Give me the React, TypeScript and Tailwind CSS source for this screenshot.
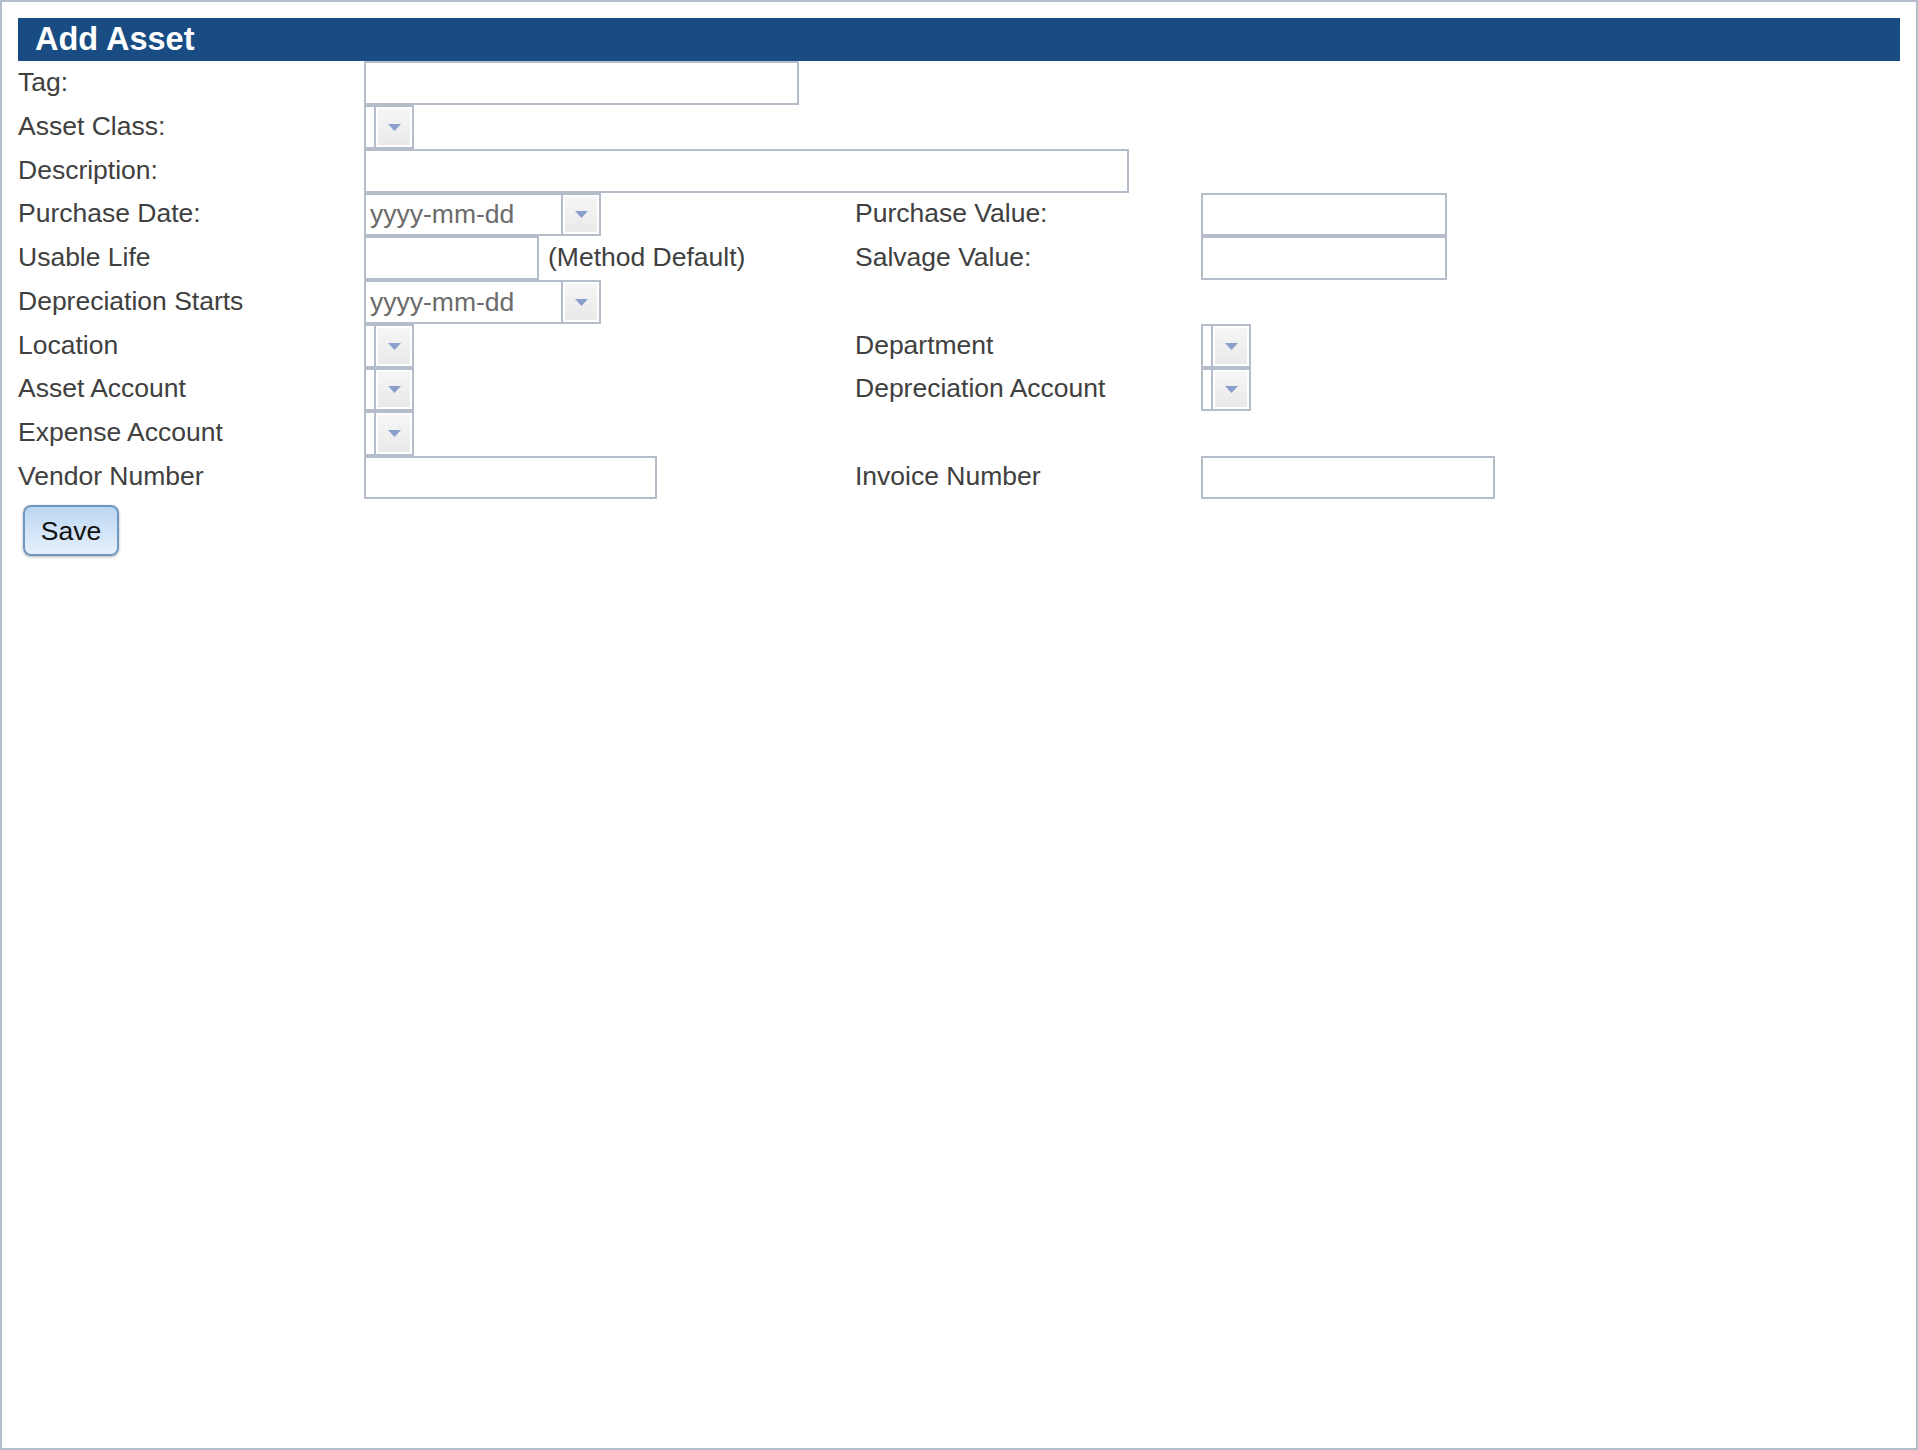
import React from 'react';

const bd = 'border-2 border-[#b6bdca]';

function Arrow() {
  return (
    <svg width="13" height="7" viewBox="0 0 13 7">
      <polygon points="0,0 13,0 6.5,7" fill="#8a9fcb" />
    </svg>);

}

function DropButton() {
  return (
    <div className="w-[38px] h-full border-l-2 border-[#b6bdca] p-[2px] bg-white">
      <div className="w-full h-full bg-gradient-to-b from-[#f6f6f6] to-[#e9e9e9] flex items-center justify-center">
        <Arrow />
      </div>
    </div>);

}

function Combo() {
  return (
    <div className={`${bd} h-full w-[50px] flex bg-white`}>
      <div className="w-[8px]" />
      <DropButton />
    </div>);

}

function DateField() {
  return (
    <div className={`${bd} h-full w-[237px] flex bg-white`}>
      <div className="flex-1 flex items-center pl-[4px] pb-[1px] text-[#6b6b6b]">yyyy-mm-dd</div>
      <DropButton />
    </div>);

}

function TextBox({ w }: {w: string;}) {
  return <div className={`${bd} h-full ${w} bg-white`} />;
}

function Label({ children }: {children: React.ReactNode;}) {
  return <div className="flex items-center pb-[3px] text-[#404040]">{children}</div>;
}

export default function App() {
  return (
    <div className="w-[1918px] h-[1450px] border-2 border-[#b6bdca] bg-white px-[16px] pt-[16px] font-['Liberation_Sans',Arial,sans-serif] text-[26.5px] leading-[30px]">
      <div className="h-[43px] bg-[#1a4c84] pl-[17px] text-white font-bold text-[32.5px] leading-[43px]">
        Add Asset
      </div>

      <div className="grid grid-cols-[346px_491px_346px_1fr] grid-rows-[44px_44px_44px_43px_44px_44px_44px_43px_45px_43px]">
        <Label>Tag:</Label>
        <div className="col-span-3"><TextBox w="w-[435px]" /></div>

        <Label>Asset Class:</Label>
        <div className="col-span-3"><Combo /></div>

        <Label>Description:</Label>
        <div className="col-span-3"><TextBox w="w-[765px]" /></div>

        <Label>Purchase Date:</Label>
        <div><DateField /></div>
        <Label>Purchase Value:</Label>
        <div><TextBox w="w-[246px]" /></div>

        <Label>Usable Life</Label>
        <div className="flex items-center h-full">
          <TextBox w="w-[175px]" />
          <span className="ml-[9px] pb-[3px] text-[#404040]">(Method Default)</span>
        </div>
        <Label>Salvage Value:</Label>
        <div><TextBox w="w-[246px]" /></div>

        <Label>Depreciation Starts</Label>
        <div className="col-span-3"><DateField /></div>

        <Label>Location</Label>
        <div><Combo /></div>
        <Label>Department</Label>
        <div><Combo /></div>

        <Label>Asset Account</Label>
        <div><Combo /></div>
        <Label>Depreciation Account</Label>
        <div><Combo /></div>

        <Label>Expense Account</Label>
        <div className="col-span-3"><Combo /></div>

        <Label>Vendor Number</Label>
        <div><TextBox w="w-[293px]" /></div>
        <Label>Invoice Number</Label>
        <div><TextBox w="w-[294px]" /></div>
      </div>

      <button className="mt-[6px] ml-[5px] w-[96px] h-[51px] rounded-[8px] border-2 border-[#6f97c1] bg-gradient-to-b from-[#bbd6f2] to-[#e6f0fb] text-[#111] text-[26.5px] shadow-[0_1px_3px_rgba(0,0,0,0.3)]">
        Save
      </button>
    </div>);

}
